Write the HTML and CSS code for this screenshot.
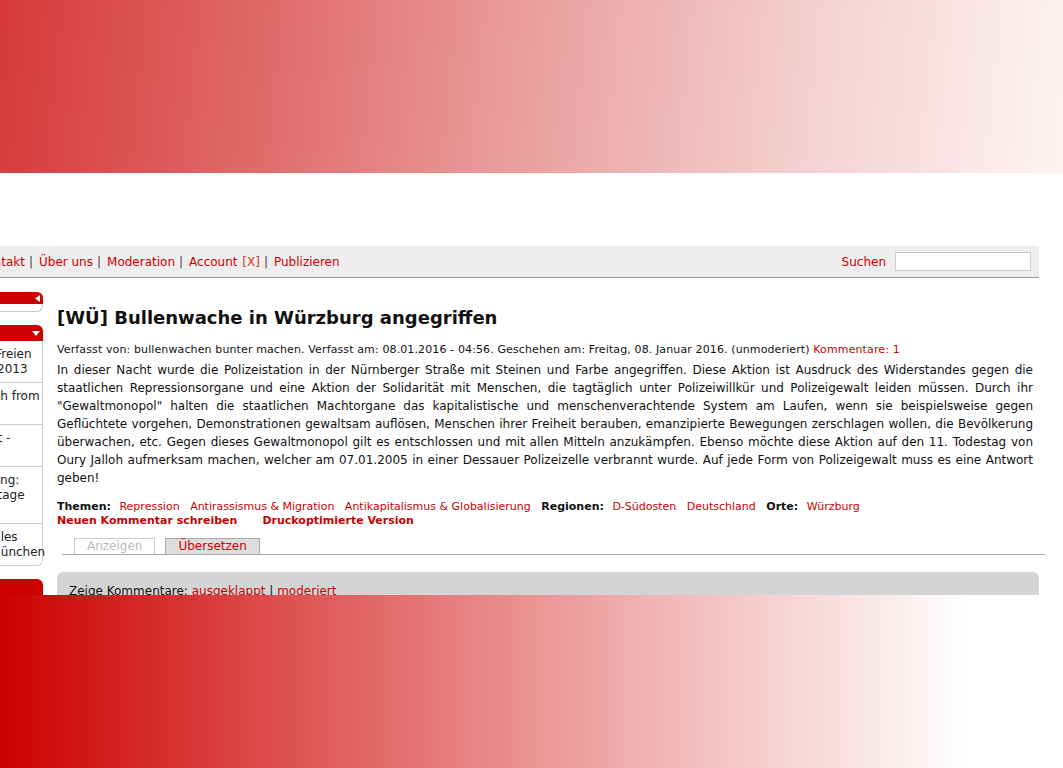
FILE: index.html
```html
<!DOCTYPE html>
<html lang="de">
<head>
<meta charset="utf-8">
<title>[WÜ] Bullenwache in Würzburg angegriffen</title>
<link rel="stylesheet" href="styles.css">
</head>
<body>
<div class="banner"></div>
<div class="spacer"></div>
<div class="page">
  <div class="navbar">
    <div class="nav-links">
      <a href="#">Kontakt</a><span class="sep">|</span><a href="#">Über uns</a><span class="sep">|</span><a href="#">Moderation</a><span class="sep">|</span><a href="#">Account</a> <a href="#" class="x">[X]</a><span class="sep">|</span><a href="#">Publizieren</a>
    </div>
    <form class="search">
      <a href="#">Suchen</a>
      <input type="text" aria-label="Suchen">
    </form>
  </div>
  <div class="layout">
    <aside class="sidebar">
      <div class="box">
        <div class="box-head small">
          <svg class="tri" width="5" height="7" viewBox="0 0 5 7"><path d="M5 0 L0 3.5 L5 7 Z" fill="#fff"/></svg>
        </div>
        <div class="box-body empty"></div>
      </div>
      <div class="box">
        <div class="box-head">
          <svg class="tri" width="8" height="5" viewBox="0 0 8 5"><path d="M0 0 L8 0 L4 5 Z" fill="#fff"/></svg>
        </div>
        <div class="box-body">
          <div class="item">Kundgebung gegen den Freien<br>Wähler in Bayern – März 2013</div>
          <div class="item">Filmabend: Exodus Munich from<br>Damaskus</div>
          <div class="item">Solikonzert im Kafe Marat -<br>Soli</div>
          <div class="item">Buchvorstellung Erinnerung:<br>Antifaschistische Aktionstage<br>im Januar</div>
          <div class="item">Podiumsdiskussion: Soziales<br>gegen Wohnungsnot in München</div>
        </div>
      </div>
      <div class="box">
        <div class="box-head"></div>
        <div class="box-body tall"></div>
      </div>
    </aside>
    <main class="main">
      <h1 class="title">[WÜ] Bullenwache in Würzburg angegriffen</h1>
      <p class="meta">Verfasst von: bullenwachen bunter machen. Verfasst am: 08.01.2016 - 04:56. Geschehen am: Freitag, 08. Januar 2016. (unmoderiert) <a href="#">Kommentare: 1</a></p>
      <p class="text">In dieser Nacht wurde die Polizeistation in der Nürnberger Straße mit Steinen und Farbe angegriffen. Diese Aktion ist Ausdruck des Widerstandes gegen die staatlichen Repressionsorgane und eine Aktion der Solidarität mit Menschen, die tagtäglich unter Polizeiwillkür und Polizeigewalt leiden müssen. Durch ihr "Gewaltmonopol" halten die staatlichen Machtorgane das kapitalistische und menschenverachtende System am Laufen, wenn sie beispielsweise gegen Geflüchtete vorgehen, Demonstrationen gewaltsam auflösen, Menschen ihrer Freiheit berauben, emanzipierte Bewegungen zerschlagen wollen, die Bevölkerung überwachen, etc. Gegen dieses Gewaltmonopol gilt es entschlossen und mit allen Mitteln anzukämpfen. Ebenso möchte diese Aktion auf den 11. Todestag von Oury Jalloh aufmerksam machen, welcher am 07.01.2005 in einer Dessauer Polizeizelle verbrannt wurde. Auf jede Form von Polizeigewalt muss es eine Antwort geben!</p>
      <div class="tags">
        <b>Themen:</b> <a href="#">Repression</a> <a href="#">Antirassismus &amp; Migration</a> <a href="#">Antikapitalismus &amp; Globalisierung</a> <b>Regionen:</b> <a href="#">D-Südosten</a> <a href="#">Deutschland</a> <b>Orte:</b> <a href="#">Würzburg</a>
      </div>
      <div class="actions">
        <a href="#">Neuen Kommentar schreiben</a>
        <a href="#">Druckoptimierte Version</a>
      </div>
      <div class="tabs">
        <span class="tab active">Anzeigen</span>
        <a href="#" class="tab">Übersetzen</a>
      </div>
      <div class="comments">
        Zeige Kommentare: <a href="#">ausgeklappt</a> | <a href="#">moderiert</a>
      </div>
    </main>
  </div>
</div>
<div class="fade"></div>
</body>
</html>
```
FILE: styles.css
```css
* { box-sizing: border-box; }
html, body { margin: 0; padding: 0; }
body {
  font-family: "DejaVu Sans", Verdana, sans-serif;
  font-size: 12px;
  color: #111;
  background: #fff;
  overflow: hidden;
}
a { color: #cc0000; text-decoration: none; }

.banner {
  height: 173px;
  background: linear-gradient(96deg, #d6393a 0%, #e06a6a 25%, #eaa0a0 50%, #f4cfcf 75%, #fdf4f4 100%);
}
.spacer { height: 73px; }

.page {
  margin-left: -161px;
  width: 1200px;
}

.navbar {
  height: 32px;
  background: #eee;
  border-bottom: 1px solid #999;
  display: flex;
  align-items: center;
  justify-content: space-between;
  padding: 0 8px 0 140px;
}
.nav-links { color: #444; white-space: nowrap; }
.nav-links .sep { margin: 0 6px 0 4px; }
.nav-links .x { color: #d2401a; margin-left: 1px; }
.search {
  margin: 0;
  display: flex;
  align-items: center;
  gap: 9px;
}
.search input {
  width: 136px;
  height: 19px;
  border: 1px solid #ccc;
  background: #fff;
  margin: 0;
  padding: 0;
}

.layout {
  display: flex;
  gap: 14px;
  padding-top: 14px;
}

.sidebar {
  width: 204px;
  flex: none;
  display: flex;
  flex-direction: column;
  gap: 13px;
}
.box-head {
  background: #cc0000;
  height: 16px;
  border-radius: 0 6px 0 0;
  display: flex;
  align-items: center;
  justify-content: flex-end;
  padding-right: 3px;
}
.box-head.small { height: 12px; padding-right: 3px; }
.box-body {
  border: 1px solid #ccc;
  border-top: none;
  border-radius: 0 0 6px 0;
}
.box-body.empty { height: 8px; }
.box-body.tall { height: 120px; }
.item {
  padding: 6px 8px 5px 8px;
  line-height: 15px;
  white-space: nowrap;
  color: #222;
  border-bottom: 1px solid #ccc;
}
.item:last-child { border-bottom: none; }

.main {
  flex: 1;
  min-width: 0;
  padding-top: 14px;
}
.title {
  margin: 0;
  font-size: 18px;
  line-height: 24px;
  font-weight: bold;
  color: #111;
}
.meta {
  margin: 13px 0 0;
  font-size: 11px;
  line-height: 14px;
  letter-spacing: 0.12px;
}
.text {
  margin: 4px 6px 0 0;
  line-height: 18px;
  text-align: justify;
}
.tags {
  margin-top: 13px;
  font-size: 11px;
  line-height: 14px;
}
.tags b { margin-right: 5px; }
.tags a { margin-right: 7px; }
.actions {
  font-size: 11px;
  line-height: 14px;
  font-weight: bold;
  display: flex;
  gap: 25px;
}
.tabs {
  margin: 10px -6px 0 5px;
  padding-left: 12px;
  display: flex;
  gap: 10px;
  border-bottom: 1px solid #aaa;
}
.tab {
  display: block;
  height: 16px;
  line-height: 15px;
  padding: 0 12px;
  border: 1px solid #aaa;
  border-bottom: none;
  background: #ddd;
}
.tab.active {
  background: #fff;
  color: #bbb;
  border-color: #ccc;
}
.comments {
  margin-top: 17px;
  background: #d4d4d4;
  border-radius: 6px;
  padding: 12px 12px 30px;
  line-height: 14px;
}

.fade {
  position: fixed;
  left: 0;
  right: 0;
  bottom: 0;
  height: 173px;
  background: linear-gradient(90deg, #cc0000 0%, #e05a5a 30%, #f0b0b0 60%, #ffffff 91%);
}
```
